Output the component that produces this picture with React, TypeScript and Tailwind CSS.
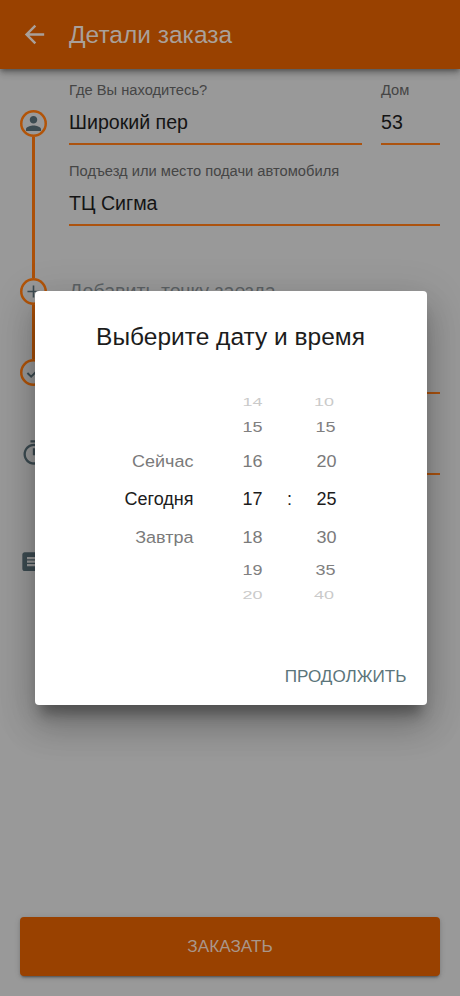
import React from "react";
import { clsx } from "clsx";

const wheelRows = [
  "h-5 text-[#cacaca] [--squash:0.58]",
  "h-[30px] text-[#808080] [--squash:0.8]",
  "h-[38px] text-[#7a7a7a] [--squash:0.95]",
  "h-[38px] text-[#1c1c1c] [--squash:1]",
  "h-[37px] text-[#7a7a7a] [--squash:0.95]",
  "h-[30px] text-[#808080] [--squash:0.8]",
  "h-5 text-[#cacaca] [--squash:0.58]",
];

const days = ["", "", "Сейчас", "Сегодня", "Завтра", "", ""];
const hours = ["14", "15", "16", "17", "18", "19", "20"];
const minutes = ["10", "15", "20", "25", "30", "35", "40"];

// horizontal drift of the outer rows in the minutes wheel
const minuteShift = [
  "-translate-x-[2.5px]",
  "-translate-x-px",
  "",
  "",
  "",
  "-translate-x-px",
  "-translate-x-[2.5px]",
];

function Wheel({ items, className, shift }: any) {
  return (
    <div className={clsx("flex flex-col text-[18px]", className)}>
      {items.map((item: string, i: number) => (
        <div key={i} className={clsx("flex items-center", wheelRows[i], shift && shift[i])}>
          <span className="w-full [transform:scaleY(var(--squash))]">{item}</span>
        </div>
      ))}
    </div>
  );
}

function Field({ label, value, className }: any) {
  return (
    <div className={clsx("flex h-[81px] shrink-0 flex-col", className)}>
      <span className="h-[17px] whitespace-nowrap text-[14.7px] leading-[17px] text-[#454545]">
        {label}
      </span>
      <div className="mt-[6px] flex h-[38px] items-center pb-[3px] text-[19.6px] text-[#141414]">
        {value}
      </div>
      <div className="h-[1.5px] shrink-0 bg-[#ac530f]" />
    </div>
  );
}

function Dot({ children }: any) {
  return (
    <div className="flex size-[27px] shrink-0 items-center justify-center rounded-full shadow-[inset_0_0_0_2.5px_#b25408]">
      {children}
    </div>
  );
}

function Rail() {
  return (
    <div className="flex w-[27px] shrink-0 flex-col items-center pt-[40.5px] text-[#3c4b51]">
      <Dot>
        <svg viewBox="4 4 16 16" className="size-[15px] shrink-0" fill="currentColor">
          <path d="M12 12c2.21 0 4-1.79 4-4s-1.79-4-4-4-4 1.79-4 4 1.79 4 4 4zm0 2c-2.67 0-8 1.34-8 4v2h16v-2c0-2.66-5.33-4-8-4z" />
        </svg>
      </Dot>
      <div className="h-[141px] w-[2.5px] bg-[#ac5008]" />
      <Dot>
        <svg viewBox="0 0 14 14" className="size-[13px] shrink-0" stroke="currentColor" strokeWidth="1.7">
          <path d="M7 0.5v13M0.5 7h13" />
        </svg>
      </Dot>
      <div className="h-[54px] w-[2.5px] bg-[#ac5008]" />
      <Dot>
        <svg viewBox="0 0 16 16" className="mt-[3px] size-[15px] shrink-0" fill="none" stroke="currentColor" strokeWidth="2">
          <path d="M1.5 7.5l4 4 8-8" />
        </svg>
      </Dot>
      <svg viewBox="0 0 24 24" className="mt-[53px] size-7 shrink-0" fill="currentColor">
        <path d="M15 1H9v2h6V1zm-4 13h2V8h-2v6zm8.03-6.61l1.42-1.42c-.43-.51-.9-.99-1.41-1.41l-1.42 1.42C16.07 4.74 14.12 4 12 4c-4.97 0-9 4.03-9 9s4.02 9 9 9 9-4.03 9-9c0-2.12-.74-4.07-1.97-5.61zM12 20c-3.87 0-7-3.13-7-7s3.13-7 7-7 7 3.13 7 7-3.13 7-7 7z" />
      </svg>
      <svg viewBox="0 0 24 24" className="mt-[83.5px] size-7 shrink-0" fill="currentColor">
        <path d="M20 2H4c-1.1 0-2 .9-2 2v12c0 1.1.9 2 2 2h14l4 4V4c0-1.1-.9-2-2-2zm-2 12H6v-2h12v2zm0-3H6V9h12v2zm0-3H6V6h12v2z" />
      </svg>
    </div>
  );
}

export default function App() {
  return (
    <div className="relative flex h-[996px] w-[460px] flex-col overflow-hidden bg-[#999999] font-['Liberation_Sans',sans-serif]">
      <header className="flex h-[69px] shrink-0 items-center bg-[#994100] pl-5 shadow-[0_2px_5px_-1px_rgba(0,0,0,0.4),0_5px_6px_rgba(0,0,0,0.14),0_1px_12px_rgba(0,0,0,0.12)]">
        <svg viewBox="0 0 24 24" className="size-[29px]" fill="#a9a09a">
          <path d="M20 11H7.83l5.59-5.59L12 4l-8 8 8 8 1.41-1.41L7.83 13H20v-2z" />
        </svg>
        <h1 className="ml-5 pt-px text-[24.5px] text-[#a9a09a]">Детали заказа</h1>
      </header>

      <main className="flex grow px-5">
        <Rail />
        <div className="ml-[22px] flex grow flex-col pt-[13px]">
          <div className="flex gap-[19px]">
            <Field label="Где Вы находитесь?" value="Широкий пер" className="grow" />
            <Field label="Дом" value="53" className="w-[59px]" />
          </div>
          <Field label="Подъезд или место подачи автомобиля" value="ТЦ Сигма" />
          <div className="mt-[35px] h-[22px] text-[19.6px] leading-[24px] text-[#5c6265]">
            Добавить точку заезда
          </div>
          <Field label="" value="" className="mt-[30px]" />
          <Field label="" value="" />
        </div>
      </main>

      <footer className="shrink-0 px-5 pb-5">
        <button className="flex h-[59px] w-full items-center justify-center rounded-[4px] bg-[#994100] text-[17.2px] text-[#a9968a] shadow-[0_3px_2px_-2px_rgba(0,0,0,0.3),0_2px_3px_rgba(0,0,0,0.14),0_1px_6px_rgba(0,0,0,0.12)]">
          ЗАКАЗАТЬ
        </button>
      </footer>

      <div className="absolute left-[34.5px] top-[290.5px] flex h-[414.5px] w-[392px] flex-col rounded-[4px] bg-white shadow-[0_15px_12px_-6px_rgba(0,0,0,0.3),0_22px_34px_1px_rgba(0,0,0,0.18),0_10px_40px_6px_rgba(0,0,0,0.12)]">
        <h2 className="pt-[31px] text-center text-[24.5px] leading-[30px] text-[#1c1c1c]">
          Выберите дату и время
        </h2>
        <div className="mt-[41px] flex">
          <Wheel items={days} className="w-[159px] text-right" />
          <Wheel items={hours} className="ml-[49px] w-5" />
          <div className="flex w-[54px] items-center justify-center text-[18px] text-[#1c1c1c]">
            :
          </div>
          <Wheel items={minutes} shift={minuteShift} className="w-5" />
        </div>
        <div className="mt-auto flex justify-end pb-[18px] pr-[20px]">
          <button className="text-[17.1px] leading-5 text-[#5b757b]">ПРОДОЛЖИТЬ</button>
        </div>
      </div>
    </div>
  );
}
